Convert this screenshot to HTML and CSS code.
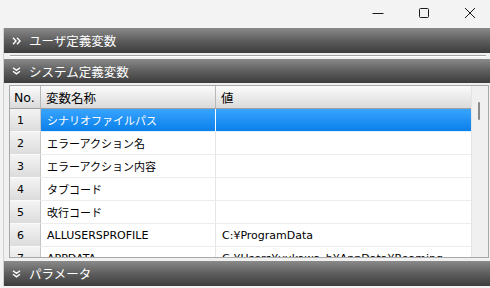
FILE: index.html
```html
<!DOCTYPE html>
<html lang="ja">
<head>
    <meta charset="UTF-8">
    <title>変数一覧</title>
    <link rel="stylesheet" href="styles.css">
</head>
<body>
    <div class="titlebar">
        <div class="win-btn">
            <svg width="12" height="12" viewBox="0 0 12 12"><path d="M0.5 6.5 H11.5" stroke="#1a1a1a" stroke-width="1"/></svg>
        </div>
        <div class="win-btn">
            <svg width="12" height="12" viewBox="0 0 12 12"><rect x="1.5" y="1.5" width="9" height="9" rx="1" fill="none" stroke="#1a1a1a" stroke-width="1"/></svg>
        </div>
        <div class="win-btn">
            <svg width="12" height="12" viewBox="0 0 12 12"><path d="M1 1 L11 11 M11 1 L1 11" stroke="#1a1a1a" stroke-width="1"/></svg>
        </div>
    </div>

    <div class="panel">
        <div class="section-bar">
            <svg class="chev" width="9" height="8" viewBox="0 0 9 8"><path d="M1 0.8 L4 4 L1 7.2 M5 0.8 L8 4 L5 7.2" fill="none" stroke="#fff" stroke-width="1.4"/></svg>
            <span>ユーザ定義変数</span>
        </div>

        <div class="splitter"><div class="splitter-line"></div></div>

        <div class="section-bar short">
            <svg class="chev" width="9" height="8" viewBox="0 0 9 8"><path d="M1 0.8 L4.5 3.4 L8 0.8 M1 4.2 L4.5 6.8 L8 4.2" fill="none" stroke="#fff" stroke-width="1.4"/></svg>
            <span>システム定義変数</span>
        </div>

        <div class="grid-area">
            <div class="grid-view">
                <div class="grid-table">
                    <div class="row head">
                        <div class="cell num">No.</div>
                        <div class="cell">変数名称</div>
                        <div class="cell">値</div>
                    </div>
                    <div class="row selected">
                        <div class="cell num">1</div>
                        <div class="cell">シナリオファイルパス</div>
                        <div class="cell"></div>
                    </div>
                    <div class="row">
                        <div class="cell num">2</div>
                        <div class="cell">エラーアクション名</div>
                        <div class="cell"></div>
                    </div>
                    <div class="row">
                        <div class="cell num">3</div>
                        <div class="cell">エラーアクション内容</div>
                        <div class="cell"></div>
                    </div>
                    <div class="row">
                        <div class="cell num">4</div>
                        <div class="cell">タブコード</div>
                        <div class="cell"></div>
                    </div>
                    <div class="row">
                        <div class="cell num">5</div>
                        <div class="cell">改行コード</div>
                        <div class="cell"></div>
                    </div>
                    <div class="row">
                        <div class="cell num">6</div>
                        <div class="cell">ALLUSERSPROFILE</div>
                        <div class="cell">C:¥ProgramData</div>
                    </div>
                    <div class="row">
                        <div class="cell num">7</div>
                        <div class="cell">APPDATA</div>
                        <div class="cell">C:¥Users¥yukawa_h¥AppData¥Roaming</div>
                    </div>
                </div>
                <div class="scrollbar"><div class="thumb"></div></div>
            </div>
        </div>

        <div class="section-bar">
            <svg class="chev" width="9" height="8" viewBox="0 0 9 8"><path d="M1 0.8 L4.5 3.4 L8 0.8 M1 4.2 L4.5 6.8 L8 4.2" fill="none" stroke="#fff" stroke-width="1.4"/></svg>
            <span>パラメータ</span>
        </div>
    </div>
</body>
</html>
```

FILE: styles.css
```css
body {
    margin: 0;
    background: #f3f3f3;
    overflow: hidden;
    font-family: "Noto Sans CJK JP", sans-serif;
}
.titlebar {
    height: 28px;
    display: flex;
    justify-content: flex-end;
    margin-right: -3px;
}
.win-btn {
    width: 46px;
    display: flex;
    align-items: center;
    justify-content: center;
    padding-bottom: 3px;
}
.panel {
    margin-left: 3px;
    border-left: 1px solid #d2d2d2;
    background: #f0f0f0;
}
.section-bar {
    height: 25px;
    box-sizing: border-box;
    display: flex;
    align-items: center;
    gap: 8px;
    padding-left: 8px;
    background: linear-gradient(#8a8a8a, #5e5e5e 50%, #3c3c3c);
    color: #fff;
    font-size: 12.5px;
    overflow: hidden;
}
.section-bar.short {
    height: 24px;
}
.chev {
    flex: none;
}
.splitter {
    height: 6px;
    box-sizing: border-box;
    padding: 2px 4px 0 6px;
}
.splitter-line {
    border-top: 1px solid #a4a4a4;
    border-bottom: 1px solid #fdfdfd;
}
.grid-area {
    padding: 2px 1px 3px 5px;
}
.grid-view {
    height: 173px;
    box-sizing: border-box;
    display: flex;
    border: 1px solid #a8a8a8;
    background: #fff;
}
.grid-table {
    flex: 1;
    overflow: hidden;
}
.row {
    display: grid;
    grid-template-columns: 31px 175px 1fr;
    height: 23px;
    font-family: "DejaVu Sans", "Noto Sans CJK JP", sans-serif;
    font-size: 11px;
    color: #000;
}
.cell {
    display: flex;
    align-items: center;
    padding-left: 6px;
    box-sizing: border-box;
    border-bottom: 1px solid #ececec;
    border-right: 1px solid #e6e6e6;
    white-space: nowrap;
    overflow: hidden;
}
.cell:last-child {
    border-right: none;
}
.cell.num {
    padding-left: 7px;
    background: linear-gradient(#f4f4f4, #dcdcdc);
    border-bottom: 1px solid #fafafa;
    border-right: 1px solid #c4c4c4;
}
.row.head {
    font-size: 12.5px;
    background: linear-gradient(#fbfbfb, #d9d9d9);
}
.row.head .cell {
    padding-left: 5px;
    background: none;
    border-bottom: 1px solid #a0a0a0;
    border-right: 1px solid #b8b8b8;
}
.row.head .cell:first-child {
    padding-left: 4px;
}
.row.head .cell:last-child {
    border-right: none;
}
.row.selected .cell:not(.num) {
    background: linear-gradient(#38a4ff, #0a80ea);
    color: #fff;
    border-bottom: 1px solid #dff0ff;
    border-right: 1px solid #fff;
}
.row.selected .cell:last-child {
    border-right: none;
}
.scrollbar {
    width: 16px;
    background: #f0f0f0;
    border-left: 1px solid #e4e4e4;
    position: relative;
}
.thumb {
    position: absolute;
    left: 6px;
    top: 16px;
    width: 2px;
    height: 18px;
    border-radius: 1px;
    background: #8a8a8a;
}
```
